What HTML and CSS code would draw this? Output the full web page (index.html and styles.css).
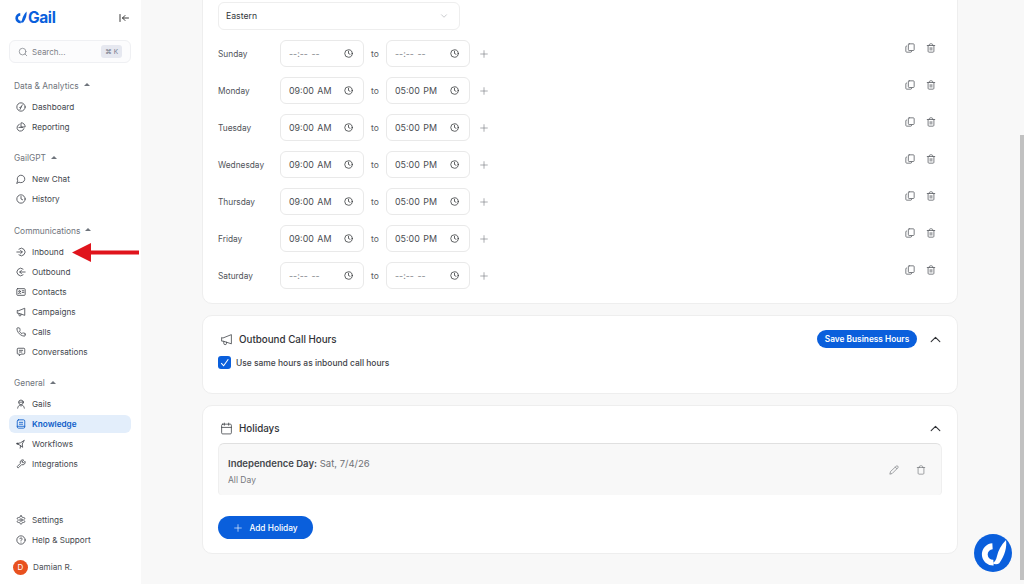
FILE: index.html
```html
<!DOCTYPE html>
<html lang="en">
<head>
    <meta charset="UTF-8">
    <meta name="viewport" content="width=device-width, initial-scale=1.0">
    <title>Gail - Knowledge</title>
    <link rel="stylesheet" href="styles.css">
</head>
<body>
    <svg class="defs" width="0" height="0">
        <symbol id="i-mark" viewBox="5 5 29 29"><path class="mark-c" d="M19 12.500A8.500 8.500 0 0 0 20 29.500"/><path class="mark-wing" d="M23.500 23C25 17 28 11 33 6 34 13 32 22 26 30 24 31.500 21 31.500 19 29.800 21 29 23 26.500 23.500 23Z"/></symbol>
        <symbol id="i-clock" viewBox="0 0 24 24"><circle cx="12" cy="12" r="10"/><path d="M12 6v6l4 2"/></symbol>
        <symbol id="i-copy" viewBox="0 0 24 24"><rect x="8" y="2" width="14" height="16" rx="2"/><path d="M4 7c-1.100 0-2 .9-2 2v11c0 1.100.9 2 2 2h10c1.100 0 2-.9 2-2"/></symbol>
        <symbol id="i-trash" viewBox="0 0 24 24"><path d="M3 6h18M19 6v14c0 1-1 2-2 2H7c-1 0-2-1-2-2V6M8 6V4c0-1 1-2 2-2h4c1 0 2 1 2 2v2M10 11v6M14 11v6"/></symbol>
        <symbol id="i-trash-o" viewBox="0 0 24 24"><path d="M3 6h18M19 6v14c0 1-1 2-2 2H7c-1 0-2-1-2-2V6M8 6V4c0-1 1-2 2-2h4c1 0 2 1 2 2v2"/></symbol>
        <symbol id="i-plus" viewBox="0 0 24 24"><path d="M12 4v16M4 12h16"/></symbol>
        <symbol id="i-up" viewBox="0 0 24 24"><path d="M4 16l8-8 8 8"/></symbol>
        <symbol id="i-down" viewBox="0 0 24 24"><path d="M6 9l6 6 6-6"/></symbol>
        <symbol id="i-mega" viewBox="0 0 24 24"><path d="M3 9v6h3l15 5V3L6 9z"/><path d="M7 15.500V19a2.500 2.500 0 0 0 5 0v-2"/></symbol>
        <symbol id="i-cal" viewBox="0 0 24 24"><rect x="3" y="4" width="18" height="18" rx="2"/><path d="M16 2v4M8 2v4M3 10h18"/></symbol>
        <symbol id="i-pencil" viewBox="0 0 24 24"><path d="M17 3a2.850 2.830 0 1 1 4 4L7.500 20.500 2 22l1.500-5.500Z"/><path d="M15 5l4 4"/></symbol>
        <symbol id="i-search" viewBox="0 0 24 24"><circle cx="11" cy="11" r="8"/><path d="m21 21-4.300-4.300"/></symbol>
        <symbol id="i-gauge" viewBox="0 0 24 24"><circle cx="12" cy="12" r="10"/><path d="M9.500 18 15 7"/><path d="M12 12l-3 1"/></symbol>
        <symbol id="i-pie" viewBox="0 0 24 24"><path d="M19 16A8.500 8.500 0 1 1 8 5.500"/><path d="M22 11A9 9 0 0 0 12 2v9z"/><path d="M7 13h9"/></symbol>
        <symbol id="i-chat" viewBox="0 0 24 24"><path d="M7.900 20A9 9 0 1 0 4 16.100L2 22Z"/></symbol>
        <symbol id="i-in" viewBox="0 0 24 24"><path d="M7 5a9 9 0 1 1 0 14M2 12h13M11 8l4 4-4 4"/></symbol>
        <symbol id="i-out" viewBox="0 0 24 24"><path d="M17 5a9 9 0 1 0 0 14M22 12H9M13 8l-4 4 4 4"/></symbol>
        <symbol id="i-contact" viewBox="0 0 24 24"><rect x="2" y="4" width="20" height="16" rx="2"/><circle cx="8.500" cy="10.500" r="2"/><path d="M5 16c.8-2.400 6.200-2.400 7 0M15 9h4M15 13h4"/></symbol>
        <symbol id="i-phone" viewBox="0 0 24 24"><path d="M22 16.920v3a2 2 0 0 1-2.180 2 19.790 19.790 0 0 1-8.630-3.070 19.500 19.500 0 0 1-6-6 19.790 19.790 0 0 1-3.070-8.670A2 2 0 0 1 4.110 2h3a2 2 0 0 1 2 1.720 12.840 12.840 0 0 0 .7 2.810 2 2 0 0 1-.45 2.110L8.090 9.910a16 16 0 0 0 6 6l1.270-1.270a2 2 0 0 1 2.110-.45 12.840 12.840 0 0 0 2.810.7A2 2 0 0 1 22 16.920z"/></symbol>
        <symbol id="i-msg" viewBox="0 0 24 24"><path d="M21 15a2 2 0 0 1-2 2H12l-4 4v-4H5a2 2 0 0 1-2-2V5a2 2 0 0 1 2-2h14a2 2 0 0 1 2 2z"/><path d="M8 8h8M8 12h6"/></symbol>
        <symbol id="i-gails" viewBox="0 0 24 24"><circle cx="12" cy="8" r="5.500"/><path d="M6.500 7.500c3 .5 7 .5 11-1M4 22c.5-4 3-6.500 5-7.500l3 3 3-3c2 1 4.500 3.500 5 7.500"/></symbol>
        <symbol id="i-book" viewBox="0 0 24 24"><rect x="3" y="2" width="18" height="20" rx="3"/><path d="M8 8h8M8 12.500h8M3 17.500h18"/></symbol>
        <symbol id="i-flow" viewBox="0 0 24 24"><path d="M3 11l8-2 9-6-5 9 1 8-5-4zM11 16l-1 6"/><circle cx="3" cy="11" r="1.500"/></symbol>
        <symbol id="i-wrench" viewBox="0 0 24 24"><path d="M14.700 6.300a1 1 0 0 0 0 1.400l1.600 1.600a1 1 0 0 0 1.400 0l3.770-3.770a6 6 0 0 1-7.940 7.940l-6.910 6.910a2.120 2.120 0 0 1-3-3l6.910-6.910a6 6 0 0 1 7.940-7.940l-3.760 3.760z"/></symbol>
        <symbol id="i-gear" viewBox="0 0 24 24"><path d="M12.220 2h-.44a2 2 0 0 0-2 2v.18a2 2 0 0 1-1 1.730l-.43.25a2 2 0 0 1-2 0l-.15-.08a2 2 0 0 0-2.730.73l-.22.38a2 2 0 0 0 .73 2.730l.15.1a2 2 0 0 1 1 1.720v.51a2 2 0 0 1-1 1.740l-.15.09a2 2 0 0 0-.73 2.730l.22.38a2 2 0 0 0 2.730.73l.15-.08a2 2 0 0 1 2 0l.43.25a2 2 0 0 1 1 1.730V20a2 2 0 0 0 2 2h.44a2 2 0 0 0 2-2v-.18a2 2 0 0 1 1-1.730l.43-.25a2 2 0 0 1 2 0l.15.08a2 2 0 0 0 2.730-.73l.22-.39a2 2 0 0 0-.73-2.730l-.15-.08a2 2 0 0 1-1-1.740v-.5a2 2 0 0 1 1-1.740l.15-.09a2 2 0 0 0 .73-2.730l-.22-.38a2 2 0 0 0-2.730-.73l-.15.08a2 2 0 0 1-2 0l-.43-.25a2 2 0 0 1-1-1.730V4a2 2 0 0 0-2-2z"/><circle cx="12" cy="12" r="3"/></symbol>
        <symbol id="i-help" viewBox="0 0 24 24"><circle cx="12" cy="12" r="10"/><path d="M9.090 9a3 3 0 0 1 5.830 1c0 2-3 3-3 3M12 17h.01"/></symbol>
        <symbol id="i-collapse" viewBox="0 0 24 24"><path d="M4 5v14M21 12H9M14 7l-5 5 5 5"/></symbol>
    </svg>

    <aside class="sidebar">
        <div class="brand">
            <div class="logo">
                <svg class="logo-mark"><use href="#i-mark"/></svg>
                <span>Gail</span>
            </div>
            <svg class="ic collapse"><use href="#i-collapse"/></svg>
        </div>
        <div class="searchbox">
            <svg class="ic search-ic"><use href="#i-search"/></svg>
            <span class="search-text">Search...</span>
            <span class="kbd">⌘ K</span>
        </div>

        <div class="group">
            <div class="group-title">Data &amp; Analytics <span class="caret"></span></div>
            <a class="item"><svg class="ic"><use href="#i-gauge"/></svg>Dashboard</a>
            <a class="item"><svg class="ic"><use href="#i-pie"/></svg>Reporting</a>
        </div>
        <div class="group">
            <div class="group-title">GailGPT <span class="caret"></span></div>
            <a class="item"><svg class="ic"><use href="#i-chat"/></svg>New Chat</a>
            <a class="item"><svg class="ic"><use href="#i-clock"/></svg>History</a>
        </div>
        <div class="group">
            <div class="group-title">Communications <span class="caret"></span></div>
            <a class="item"><svg class="ic"><use href="#i-in"/></svg>Inbound</a>
            <a class="item"><svg class="ic"><use href="#i-out"/></svg>Outbound</a>
            <a class="item"><svg class="ic"><use href="#i-contact"/></svg>Contacts</a>
            <a class="item"><svg class="ic"><use href="#i-mega"/></svg>Campaigns</a>
            <a class="item"><svg class="ic"><use href="#i-phone"/></svg>Calls</a>
            <a class="item"><svg class="ic"><use href="#i-msg"/></svg>Conversations</a>
        </div>
        <div class="group">
            <div class="group-title">General <span class="caret"></span></div>
            <a class="item"><svg class="ic"><use href="#i-gails"/></svg>Gails</a>
            <a class="item active"><svg class="ic"><use href="#i-book"/></svg>Knowledge</a>
            <a class="item"><svg class="ic"><use href="#i-flow"/></svg>Workflows</a>
            <a class="item"><svg class="ic"><use href="#i-wrench"/></svg>Integrations</a>
        </div>

        <div class="sidebar-bottom">
            <a class="item"><svg class="ic"><use href="#i-gear"/></svg>Settings</a>
            <a class="item"><svg class="ic"><use href="#i-help"/></svg>Help &amp; Support</a>
            <div class="user"><span class="avatar">D</span>Damian R.</div>
        </div>
    </aside>

    <main class="main">
        <section class="card hours">
            <div class="select">Eastern <svg class="ic select-ic"><use href="#i-down"/></svg></div>

            <div class="row">
                <span class="day">Sunday</span>
                <div class="time empty">--:-- -- <svg class="ic"><use href="#i-clock"/></svg></div>
                <span class="to">to</span>
                <div class="time empty">--:-- -- <svg class="ic"><use href="#i-clock"/></svg></div>
                <svg class="ic add"><use href="#i-plus"/></svg>
                <div class="actions"><svg class="ic"><use href="#i-copy"/></svg><svg class="ic"><use href="#i-trash"/></svg></div>
            </div>
            <div class="row">
                <span class="day">Monday</span>
                <div class="time">09:00 AM <svg class="ic"><use href="#i-clock"/></svg></div>
                <span class="to">to</span>
                <div class="time">05:00 PM <svg class="ic"><use href="#i-clock"/></svg></div>
                <svg class="ic add"><use href="#i-plus"/></svg>
                <div class="actions"><svg class="ic"><use href="#i-copy"/></svg><svg class="ic"><use href="#i-trash"/></svg></div>
            </div>
            <div class="row">
                <span class="day">Tuesday</span>
                <div class="time">09:00 AM <svg class="ic"><use href="#i-clock"/></svg></div>
                <span class="to">to</span>
                <div class="time">05:00 PM <svg class="ic"><use href="#i-clock"/></svg></div>
                <svg class="ic add"><use href="#i-plus"/></svg>
                <div class="actions"><svg class="ic"><use href="#i-copy"/></svg><svg class="ic"><use href="#i-trash"/></svg></div>
            </div>
            <div class="row">
                <span class="day">Wednesday</span>
                <div class="time">09:00 AM <svg class="ic"><use href="#i-clock"/></svg></div>
                <span class="to">to</span>
                <div class="time">05:00 PM <svg class="ic"><use href="#i-clock"/></svg></div>
                <svg class="ic add"><use href="#i-plus"/></svg>
                <div class="actions"><svg class="ic"><use href="#i-copy"/></svg><svg class="ic"><use href="#i-trash"/></svg></div>
            </div>
            <div class="row">
                <span class="day">Thursday</span>
                <div class="time">09:00 AM <svg class="ic"><use href="#i-clock"/></svg></div>
                <span class="to">to</span>
                <div class="time">05:00 PM <svg class="ic"><use href="#i-clock"/></svg></div>
                <svg class="ic add"><use href="#i-plus"/></svg>
                <div class="actions"><svg class="ic"><use href="#i-copy"/></svg><svg class="ic"><use href="#i-trash"/></svg></div>
            </div>
            <div class="row">
                <span class="day">Friday</span>
                <div class="time">09:00 AM <svg class="ic"><use href="#i-clock"/></svg></div>
                <span class="to">to</span>
                <div class="time">05:00 PM <svg class="ic"><use href="#i-clock"/></svg></div>
                <svg class="ic add"><use href="#i-plus"/></svg>
                <div class="actions"><svg class="ic"><use href="#i-copy"/></svg><svg class="ic"><use href="#i-trash"/></svg></div>
            </div>
            <div class="row">
                <span class="day">Saturday</span>
                <div class="time empty">--:-- -- <svg class="ic"><use href="#i-clock"/></svg></div>
                <span class="to">to</span>
                <div class="time empty">--:-- -- <svg class="ic"><use href="#i-clock"/></svg></div>
                <svg class="ic add"><use href="#i-plus"/></svg>
                <div class="actions"><svg class="ic"><use href="#i-copy"/></svg><svg class="ic"><use href="#i-trash"/></svg></div>
            </div>
        </section>

        <section class="card outbound">
            <div class="card-head">
                <svg class="ic head-ic"><use href="#i-mega"/></svg>
                <h2>Outbound Call Hours</h2>
                <button class="btn-save">Save Business Hours</button>
                <svg class="ic chevron"><use href="#i-up"/></svg>
            </div>
            <label class="check">
                <span class="box"><svg viewBox="0 0 12 12"><path d="M3 6.500 5.200 9 9.500 3"/></svg></span>
                Use same hours as inbound call hours
            </label>
        </section>

        <section class="card holidays">
            <div class="card-head">
                <svg class="ic head-ic"><use href="#i-cal"/></svg>
                <h2>Holidays</h2>
                <svg class="ic chevron push"><use href="#i-up"/></svg>
            </div>
            <div class="holiday">
                <div class="holiday-text">
                    <p class="holiday-name"><b>Independence Day:</b> Sat, 7/4/26</p>
                    <p class="holiday-sub">All Day</p>
                </div>
                <div class="holiday-actions">
                    <svg class="ic"><use href="#i-pencil"/></svg>
                    <svg class="ic"><use href="#i-trash-o"/></svg>
                </div>
            </div>
            <button class="btn-add"><svg class="ic"><use href="#i-plus"/></svg>Add Holiday</button>
        </section>
    </main>

    <div class="scrollbar"><div class="thumb"></div></div>

    <!-- annotation arrow drawn over the screenshot -->
    <svg class="red-arrow" viewBox="0 0 67 19"><path d="M0 9.500 19 0V7.500H67V11.500H19V19Z" fill="#e0141c"/></svg>

    <button class="fab" aria-label="Open Gail">
        <svg class="fab-mark"><use href="#i-mark"/></svg>
    </button>
</body>
</html>
```

FILE: styles.css
```css
* {
    box-sizing: border-box;
}
html, body {
    height: 100%;
    margin: 0;
}
body {
    display: flex;
    height: 584px;
    overflow: hidden;
    background: #f8f8f8;
    font-family: Inter, "Liberation Sans", sans-serif;
    font-size: 8.500px;
    color: #3f4349;
}
.defs {
    position: absolute;
}
.ic {
    width: 10px;
    height: 10px;
    flex: none;
    fill: none;
    stroke: currentColor;
    stroke-width: 2;
    stroke-linecap: round;
    stroke-linejoin: round;
}
.mark-c {
    fill: none;
    stroke: currentColor;
    stroke-width: 6;
}
.mark-wing {
    fill: currentColor;
}

/* sidebar */
.sidebar {
    width: 141px;
    flex: none;
    display: flex;
    flex-direction: column;
    background: #fff;
    padding: 0 10px 9px 9px;
}
.brand {
    height: 40px;
    display: flex;
    align-items: center;
    justify-content: space-between;
    padding: 0 1px 5px 5px;
}
.logo {
    display: flex;
    align-items: center;
    font-size: 15.500px;
    font-weight: 700;
    color: #0a5fdc;
    letter-spacing: -0.4px;
}
.logo-mark {
    width: 13px;
    height: 13px;
    margin-right: 1px;
}
.collapse {
    width: 12px;
    height: 12px;
    color: #3a3a3a;
}
.searchbox {
    height: 23px;
    display: flex;
    align-items: center;
    padding: 0 8px 0 8px;
    border: 1px solid #eff0f3;
    border-radius: 6px;
    background: #fcfcfd;
    color: #7c8087;
    font-size: 8px;
}
.search-ic {
    margin-right: 4px;
    color: #8a8e94;
}
.search-text {
    flex: 1;
}
.kbd {
    height: 13px;
    padding: 0 4px;
    display: flex;
    align-items: center;
    border-radius: 3px;
    background: #e6e8f0;
    font-size: 6.500px;
    color: #757a8a;
}
.group {
    margin-top: 15.500px;
}
.group + .group {
    margin-top: 13.500px;
}
.group-title {
    height: 14px;
    display: flex;
    align-items: center;
    padding-left: 5px;
    margin-bottom: 5px;
    color: #6f747c;
    font-size: 8.400px;
}
.caret {
    width: 0;
    height: 0;
    margin: 0 0 2px 5px;
    border-left: 3px solid transparent;
    border-right: 3px solid transparent;
    border-bottom: 3px solid #6f747c;
}
.item {
    height: 18px;
    margin-bottom: 2px;
    display: flex;
    align-items: center;
    gap: 6px;
    padding-left: 7px;
    border-radius: 6px;
    color: #43474e;
    font-size: 8.200px;
}
.item.active {
    background: #e3eefb;
    color: #0a5cc9;
    font-weight: 600;
}
.sidebar-bottom {
    margin-top: auto;
}
.user {
    display: flex;
    align-items: center;
    gap: 5px;
    height: 16px;
    margin-top: 10px;
    padding-left: 4px;
    color: #4c5058;
    font-size: 8.200px;
}
.avatar {
    width: 15px;
    height: 15px;
    border-radius: 50%;
    display: flex;
    align-items: center;
    justify-content: center;
    background: #e8511f;
    color: #fff;
    font-size: 8px;
}

/* main column: pinned to the bottom, the top of the first card scrolls off */
.main {
    flex: 1;
    display: flex;
    flex-direction: column;
    justify-content: flex-end;
    gap: 11px;
    min-width: 0;
    padding: 0 62px 30px 61px;
    overflow: hidden;
}
.card {
    flex: none;
    background: #fff;
    border: 1px solid #eeeeee;
    border-radius: 10px;
    padding: 14px 15px 14px;
}
.hours {
    padding-top: 15px;
}
.select {
    width: 242px;
    height: 28px;
    display: flex;
    align-items: center;
    justify-content: space-between;
    padding: 0 10px 0 7px;
    margin-bottom: 10px;
    border: 1px solid #eeeeee;
    border-radius: 6px;
    color: #33363b;
    font-size: 8.700px;
}
.select-ic {
    color: #a8abb0;
    stroke-width: 1.500;
}
.row {
    height: 27px;
    display: flex;
    align-items: center;
    margin-bottom: 10px;
    padding-right: 6px;
}
.row:last-child {
    margin-bottom: 0;
}
.day {
    width: 62px;
    color: #4f5359;
    font-size: 8.300px;
}
.time {
    width: 84px;
    height: 27px;
    display: flex;
    align-items: center;
    justify-content: space-between;
    padding: 0 10px 0 8px;
    border: 1px solid #e9e9e9;
    border-radius: 6px;
    color: #4a4d52;
    font-size: 8.900px;
    word-spacing: 1px;
    white-space: pre;
}
.time.empty {
    color: #85888e;
}
.time .ic {
    color: #2e3033;
    width: 9px;
    height: 9px;
}
.to {
    width: 22px;
    text-align: center;
    color: #5a5d63;
}
.add {
    margin-left: 9px;
    color: #777a80;
    stroke-width: 1.500;
}
.actions {
    margin-left: auto;
    align-self: flex-start;
    display: flex;
    gap: 11px;
    padding-top: 3px;
    color: #62656a;
}
.card-head {
    display: flex;
    align-items: center;
    height: 18px;
}
.head-ic {
    width: 13px;
    height: 13px;
    margin: 0 6px 0 2px;
    color: #43464b;
    stroke-width: 1.500;
}
.card-head h2 {
    margin: 0;
    font-size: 9.800px;
    font-weight: 500;
    color: #303236;
}
.btn-save {
    margin-left: auto;
    height: 18px;
    width: 100px;
    padding: 0;
    border: none;
    border-radius: 9px;
    background: #0a5fdc;
    color: #fff;
    font: 600 8.300px Inter, "Liberation Sans", sans-serif;
}
.chevron {
    width: 13px;
    height: 13px;
    margin-left: 12px;
    color: #2f3135;
}
.chevron.push {
    margin-left: auto;
}
.check {
    display: flex;
    align-items: center;
    gap: 5px;
    height: 13px;
    margin-top: 8px;
    margin-bottom: 10px;
    color: #3f4349;
    font-size: 8.450px;
    font-weight: 500;
}
.box {
    width: 13px;
    height: 13px;
    border-radius: 3px;
    background: #0a5fdc;
    flex: none;
}
.box svg {
    display: block;
    fill: none;
    stroke: #fff;
    stroke-width: 1;
}
.holidays {
    padding-top: 13px;
}
.holiday {
    height: 52px;
    margin-top: 6px;
    display: flex;
    align-items: center;
    justify-content: space-between;
    padding: 0 15px 0 9px;
    background: #f8f8f8;
    border-top: 1px solid #e0e0e0;
    border-left: 1px solid #efefef;
    border-right: 1px solid #efefef;
    border-radius: 6px 6px 4px 4px;
}
.holiday-text {
    padding-top: 3px;
}
.holiday-name {
    margin: 0 0 6px;
    font-size: 9.500px;
    color: #6e7176;
}
.holiday-name b {
    font-weight: 600;
    color: #45484d;
}
.holiday-sub {
    margin: 0;
    color: #77797e;
}
.holiday-actions {
    display: flex;
    gap: 17px;
    color: #6c6f74;
}
.holiday-actions .ic {
    stroke-width: 1.500;
}
.btn-add {
    display: flex;
    align-items: center;
    justify-content: center;
    gap: 6px;
    width: 95px;
    height: 23px;
    margin-top: 21px;
    padding: 0;
    border: none;
    border-radius: 12px;
    background: #0a5fdc;
    color: #fff;
    font: 500 8.300px Inter, "Liberation Sans", sans-serif;
}
.btn-add .ic {
    stroke-width: 1.500;
}

.scrollbar {
    width: 4px;
    flex: none;
    display: flex;
    padding: 135px 0 4px;
}
.thumb {
    flex: 1;
    background: #c1c1c1;
}

/* things lying over the page */
.red-arrow {
    position: absolute;
    left: 72px;
    top: 243px;
    width: 67px;
    height: 19px;
}
.fab {
    position: absolute;
    left: 974px;
    top: 534px;
    width: 38px;
    height: 38px;
    padding: 5px;
    border: none;
    border-radius: 50%;
    background: #0a5fdc;
    color: #fff;
}
.fab-mark {
    display: block;
    width: 28px;
    height: 28px;
}
```
